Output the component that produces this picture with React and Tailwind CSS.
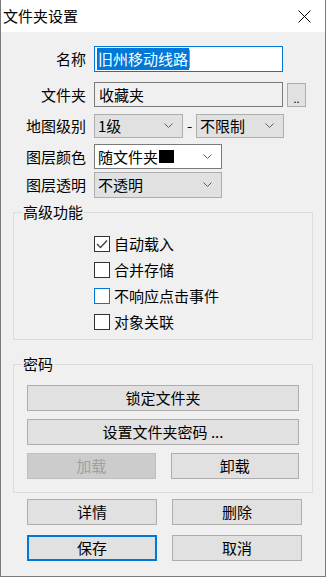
import React from "react";

function Chevron() {
  return (
    <svg width="9" height="6" viewBox="0 0 9 6" className="shrink-0">
      <polyline points="0.5,0.5 4.5,4.5 8.5,0.5" fill="none" stroke="#606060" strokeWidth="1" />
    </svg>
  );
}

function Select({ width, white, children }) {
  return (
    <div
      className={`flex items-center justify-between h-full pl-[3px] pr-[9px] border ${
        white ? "bg-white border-[#7a7a7a]" : "bg-[#e1e1e1] border-[#adadad]"
      }`}
      style={{ width }}
    >
      <div className="flex items-center gap-[1px]">{children}</div>
      <Chevron />
    </div>
  );
}

function Check({ checked, focus, children }) {
  return (
    <div className="flex items-center h-[26px]">
      <div
        className={`w-[16px] h-[16px] bg-white border flex items-center justify-center ${
          focus ? "border-[#0078d7]" : "border-[#333333]"
        }`}
      >
        {checked && (
          <svg width="12" height="10" viewBox="0 0 12 10">
            <polyline points="1,5 4.5,8.5 11,1.5" fill="none" stroke="#444" strokeWidth="1.4" />
          </svg>
        )}
      </div>
      <span className="ml-[4px]">{children}</span>
    </div>
  );
}

function Btn({ children, className = "", disabled, primary }) {
  return (
    <div
      className={`h-[26px] flex items-center justify-center ${
        disabled
          ? "bg-[#cccccc] border border-[#bfbfbf] text-[#a0a0a0]"
          : primary
          ? "bg-[#e1e1e1] border-2 border-[#0078d7]"
          : "bg-[#e1e1e1] border border-[#adadad]"
      } ${className}`}
    >
      {children}
    </div>
  );
}

function Group({ title, className = "", children }) {
  return (
    <div className={`relative mx-[12px] border border-[#dcdcdc] ${className}`}>
      <span className="absolute left-[8px] top-[-11px] px-[1px] bg-[#f0f0f0] leading-[20px]">{title}</span>
      {children}
    </div>
  );
}

export default function App() {
  return (
    <div className="w-[326px] h-[577px] bg-[#f0f0f0] border-x border-b border-[#7a7a7a] flex flex-col font-['Noto_Sans_CJK_SC','Noto_Sans',sans-serif] text-[15px] leading-[20px] text-black">
      {/* title bar */}
      <div className="h-[32px] bg-white flex items-center justify-between pl-[2px] pr-[14px] shrink-0">
        <span>文件夹设置</span>
        <svg width="13" height="13" viewBox="0 0 13 13">
          <path d="M0.5 0.5 L12.5 12.5 M12.5 0.5 L0.5 12.5" stroke="#000" strokeWidth="1" />
        </svg>
      </div>

      {/* form rows */}
      <div className="flex flex-col pt-[14px]">
        <div className="flex items-center h-[26px]">
          <span className="w-[85px] text-right">名称</span>
          <div className="ml-[8px] w-[189px] h-full bg-white border border-[#0078d7] flex items-center pl-[2px]">
            <span className="bg-[#0078d7] text-white px-[1px] leading-[22px]">旧州移动线路</span>
            <span className="w-[1px] h-[18px] bg-[#e0802f]" />
          </div>
        </div>

        <div className="flex items-center h-[25px] mt-[10px]">
          <span className="w-[85px] text-right">文件夹</span>
          <div className="ml-[8px] w-[189px] h-full bg-[#f0f0f0] border border-[#7a7a7a] flex items-center pl-[4px]">
            收藏夹
          </div>
          <div className="ml-[4px] w-[19px] h-[24px] bg-[#e1e1e1] border border-[#adadad] flex items-end justify-center pb-[2px] text-[11px] leading-[11px]">
            ..
          </div>
        </div>

        <div className="flex items-center h-[24px] mt-[7px]">
          <span className="w-[85px] text-right">地图级别</span>
          <div className="ml-[8px] h-full flex items-center">
            <Select width={89}>1级</Select>
            <span className="w-[13px] text-center">-</span>
            <Select width={88}>不限制</Select>
          </div>
        </div>

        <div className="flex items-center h-[25px] mt-[6px]">
          <span className="w-[85px] text-right">图层颜色</span>
          <div className="ml-[8px] h-full">
            <Select width={128} white>
              <span>随文件夹</span>
              <span className="w-[15px] h-[13px] bg-black" />
            </Select>
          </div>
        </div>

        <div className="flex items-center h-[26px] mt-[3px]">
          <span className="w-[85px] text-right">图层透明</span>
          <div className="ml-[8px] h-full">
            <Select width={128}>不透明</Select>
          </div>
        </div>
      </div>

      {/* advanced */}
      <Group title="高级功能" className="mt-[14px] h-[128px] pt-[18px] pl-[80px]">
        <Check checked>自动载入</Check>
        <Check>合并存储</Check>
        <Check focus>不响应点击事件</Check>
        <Check>对象关联</Check>
      </Group>

      {/* password */}
      <Group title="密码" className="mt-[24px] h-[129px] pt-[20px] pl-[13px] pr-[13px] flex flex-col gap-[8px]">
        <Btn className="w-[272px]">锁定文件夹</Btn>
        <Btn className="w-[272px]">设置文件夹密码 ...</Btn>
        <div className="flex gap-[15px]">
          <Btn disabled className="w-[130px]">加载</Btn>
          <Btn className="w-[130px]">卸载</Btn>
        </div>
      </Group>

      <div className="flex flex-col gap-[10px] pl-[26px] mt-[6px]">
        <div className="flex gap-[15px]">
          <Btn className="w-[130px]">详情</Btn>
          <Btn className="w-[130px]">删除</Btn>
        </div>
        <div className="flex gap-[15px]">
          <Btn primary className="w-[130px]">保存</Btn>
          <Btn className="w-[130px]">取消</Btn>
        </div>
      </div>
    </div>
  );
}
